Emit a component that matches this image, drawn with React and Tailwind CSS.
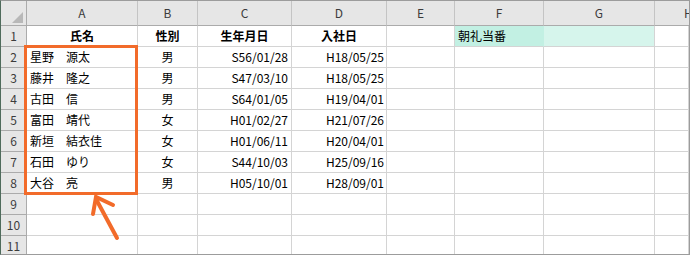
import React from "react";

const cols = ["A", "B", "C", "D", "E", "F", "G", "H"];

const people = [
  { name: "星野　源太", sex: "男", born: "S56/01/28", joined: "H18/05/25" },
  { name: "藤井　隆之", sex: "男", born: "S47/03/10", joined: "H18/05/25" },
  { name: "古田　信", sex: "男", born: "S64/01/05", joined: "H19/04/01" },
  { name: "富田　靖代", sex: "女", born: "H01/02/27", joined: "H21/07/26" },
  { name: "新垣　結衣佳", sex: "女", born: "H01/06/11", joined: "H20/04/01" },
  { name: "石田　ゆり", sex: "女", born: "S44/10/03", joined: "H25/09/16" },
  { name: "大谷　亮", sex: "男", born: "H05/10/01", joined: "H28/09/01" },
];

const grid = "grid grid-cols-[26px_111px_60px_94px_95px_68px_89px_111px_1fr]";
const cell = "h-[21px] border-r border-b border-[#d4d4d4] flex items-center text-[12px] text-black overflow-hidden whitespace-nowrap";
const rowHead = "h-[21px] border-r border-b border-[#ababab] bg-[#e6e6e6] flex items-center justify-center text-[12px] text-[#3c3c3c]";

function blankRow(n, extra = {}) {
  return (
    <div key={n} className={grid}>
      <div className={rowHead}>{n}</div>
      {cols.map((c) => (
        <div key={c} className={`${cell} ${extra[c]?.cls ?? ""}`}>{extra[c]?.text}</div>
      ))}
    </div>
  );
}

export default function App() {
  return (
    <div className="relative w-[690px] h-[255px] overflow-hidden bg-white border-t border-[#9c9c9c] border-l border-l-[#4f6b5c] border-r border-r-[#9c9c9c] border-b border-b-[#9c9c9c] font-['Noto_Sans_CJK_JP','Noto_Sans',sans-serif]">
      {/* column headers */}
      <div className={grid}>
        <div className="h-[25px] border-r border-b border-[#ababab] bg-[#e6e6e6] flex items-end justify-end pr-[3px] pb-[2px]">
          <svg width="11" height="11" viewBox="0 0 11 11">
            <polygon points="11,0 11,11 0,11" fill="#b8b8b8" />
          </svg>
        </div>
        {cols.map((c) => (
          <div
            key={c}
            className={`h-[25px] border-r border-b border-[#c4c4c4] border-b-[#ababab] bg-[#e6e6e6] flex items-center text-[12px] text-[#3c3c3c] ${c === "H" ? "pl-[29px]" : "justify-center"}`}
          >
            {c}
          </div>
        ))}
      </div>

      {/* row 1: headings */}
      <div className={grid}>
        <div className={rowHead}>1</div>
        <div className={`${cell} justify-center font-bold`}>氏名</div>
        <div className={`${cell} justify-center font-bold`}>性別</div>
        <div className={`${cell} justify-center font-bold`}>生年月日</div>
        <div className={`${cell} justify-center font-bold`}>入社日</div>
        <div className={cell} />
        <div className={`${cell} pl-[3px] bg-[#c2f0e3] border-r-[#c2f0e3]`}>朝礼当番</div>
        <div className={`${cell} bg-[#d6f5ec]`} />
        <div className={cell} />
      </div>

      {people.map((p, i) => (
        <div key={p.name} className={grid}>
          <div className={rowHead}>{i + 2}</div>
          <div className={`${cell} pl-[3px]`}>{p.name}</div>
          <div className={`${cell} justify-center`}>{p.sex}</div>
          <div className={`${cell} justify-end pr-[3px]`}>{p.born}</div>
          <div className={`${cell} justify-end pr-[2px]`}>{p.joined}</div>
          <div className={cell} />
          <div className={cell} />
          <div className={cell} />
          <div className={cell} />
        </div>
      ))}

      {blankRow(9)}
      {blankRow(10)}
      {blankRow(11)}

      {/* highlight box around names */}
      <div className="absolute left-[23px] top-[44px] w-[114px] h-[150px] border-[3px] border-[#f26b2a] pointer-events-none" />

      {/* arrow */}
      <svg className="absolute left-0 top-0 pointer-events-none" width="690" height="255">
        <line x1="116" y1="237" x2="95" y2="198" stroke="#f26b2a" strokeWidth="4" strokeLinecap="round" />
        <polyline points="92,213 95,196 112,204" fill="none" stroke="#f26b2a" strokeWidth="4" strokeLinecap="round" strokeLinejoin="miter" />
      </svg>
    </div>
  );
}
